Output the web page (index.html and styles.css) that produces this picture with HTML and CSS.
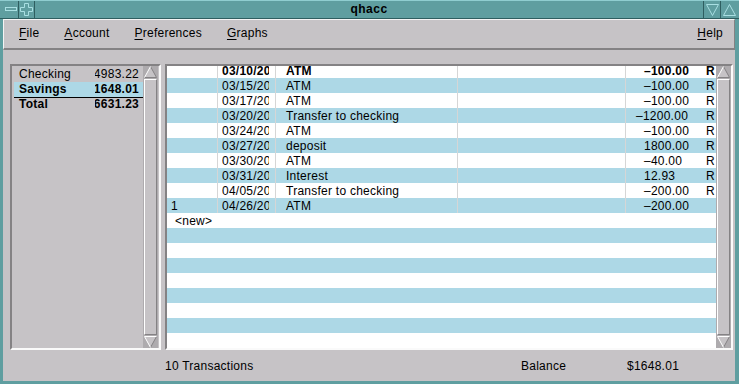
FILE: index.html
```html
<!DOCTYPE html>
<html lang="en">
<head>
    <meta charset="UTF-8">
    <meta name="viewport" content="width=device-width, initial-scale=1.0">
    <title>qhacc</title>
    <link rel="stylesheet" href="styles.css">
</head>
<body>
<div class="frame">
    <div class="titlebar">
        <div class="tbtn">
            <svg width="12" height="5"><rect x="0.5" y="0.5" width="11" height="3" fill="none" stroke="#a9dfe2"/></svg>
        </div>
        <div class="tbtn">
            <svg width="13" height="13"><polygon points="4.5,0.5 8.5,0.5 8.5,4.5 12.5,4.5 12.5,8.5 8.5,8.5 8.5,12.5 4.5,12.5 4.5,8.5 0.5,8.5 0.5,4.5 4.5,4.5" fill="none" stroke="#a9dfe2"/></svg>
        </div>
        <div class="title">qhacc</div>
        <div class="tbtn tbtn-right">
            <svg width="13" height="12"><polygon points="0.5,0.5 12.5,0.5 6.5,11.5" fill="none" stroke="#a9dfe2"/></svg>
        </div>
        <div class="tbtn tbtn-right">
            <svg width="13" height="12"><polygon points="6.5,0.5 12.5,11.5 0.5,11.5" fill="none" stroke="#a9dfe2"/></svg>
        </div>
    </div>

    <div class="window">
        <div class="menubar">
            <span class="menu-item"><u>F</u>ile</span>
            <span class="menu-item"><u>A</u>ccount</span>
            <span class="menu-item"><u>P</u>references</span>
            <span class="menu-item"><u>G</u>raphs</span>
            <span class="menu-item menu-help"><u>H</u>elp</span>
        </div>

        <div class="main">
            <div class="panel accounts">
                <div class="acct-list">
                    <div class="acct-row">
                        <span class="acct-name">Checking</span>
                        <span class="acct-amt"><span>$14983.22</span></span>
                    </div>
                    <div class="acct-row selected">
                        <span class="acct-name">Savings</span>
                        <span class="acct-amt"><span>$1648.01</span></span>
                    </div>
                    <div class="acct-row total">
                        <span class="acct-name">Total</span>
                        <span class="acct-amt"><span>$16631.23</span></span>
                    </div>
                </div>
                <div class="vscroll">
                    <svg class="arrow" width="13" height="12"><polygon points="6.5,0.5 12.5,11.5 0.5,11.5" fill="#c6c3c6"/><polyline points="6.5,0.5 12.5,11.5 0.5,11.5" fill="none" stroke="#848284"/><polyline points="0.5,11.5 6.5,0.5" fill="none" stroke="#fff"/></svg>
                    <div class="thumb"></div>
                    <svg class="arrow" width="13" height="12"><polygon points="0.5,0.5 12.5,0.5 6.5,11.5" fill="#c6c3c6"/><polyline points="12.5,0.5 6.5,11.5" fill="none" stroke="#848284"/><polyline points="6.5,11.5 0.5,0.5 12.5,0.5" fill="none" stroke="#fff"/></svg>
                </div>
            </div>

            <div class="panel ledger">
                <div class="ledger-body">
                    <div class="rows" id="rows"></div>
                </div>
                <div class="vscroll">
                    <svg class="arrow" width="13" height="12"><polygon points="6.5,0.5 12.5,11.5 0.5,11.5" fill="#c6c3c6"/><polyline points="6.5,0.5 12.5,11.5 0.5,11.5" fill="none" stroke="#848284"/><polyline points="0.5,11.5 6.5,0.5" fill="none" stroke="#fff"/></svg>
                    <div class="thumb"></div>
                    <svg class="arrow" width="13" height="12"><polygon points="0.5,0.5 12.5,0.5 6.5,11.5" fill="#c6c3c6"/><polyline points="12.5,0.5 6.5,11.5" fill="none" stroke="#848284"/><polyline points="6.5,11.5 0.5,0.5 12.5,0.5" fill="none" stroke="#fff"/></svg>
                </div>
            </div>
        </div>

        <div class="statusbar">
            <span class="status-count">10 Transactions</span>
            <span class="status-label">Balance</span>
            <span class="status-value">$1648.01</span>
        </div>
    </div>
</div>

<script>
    // Transactions for the selected account (Savings)
    const transactions = [
        { num: '',  date: '03/10/2000', desc: 'ATM', amount: '–100.00', rec: 'R' },
        { num: '',  date: '03/15/2000', desc: 'ATM', amount: '–100.00', rec: 'R' },
        { num: '',  date: '03/17/2000', desc: 'ATM', amount: '–100.00', rec: 'R' },
        { num: '',  date: '03/20/2000', desc: 'Transfer to checking', amount: '–1200.00', rec: 'R', wide: true },
        { num: '',  date: '03/24/2000', desc: 'ATM', amount: '–100.00', rec: 'R' },
        { num: '',  date: '03/27/2000', desc: 'deposit', amount: '1800.00', rec: 'R' },
        { num: '',  date: '03/30/2000', desc: 'ATM', amount: '–40.00', rec: 'R' },
        { num: '',  date: '03/31/2000', desc: 'Interest', amount: '12.93', rec: 'R' },
        { num: '',  date: '04/05/2000', desc: 'Transfer to checking', amount: '–200.00', rec: 'R' },
        { num: '1', date: '04/26/2000', desc: 'ATM', amount: '–200.00', rec: '' }
    ];

    const rows = document.getElementById('rows');
    const totalRows = 19;

    for (let i = 0; i < totalRows; i++) {
        const row = document.createElement('div');
        row.classList.add('row');
        if (i % 2 === 1) row.classList.add('alt');

        const t = transactions[i];
        if (t) {
            row.classList.add('data');
            if (i === 0) row.classList.add('current');
            row.innerHTML = `
                <span class="c-num">${t.num}</span>
                <span class="c-date"><span class="clip">${t.date}</span></span>
                <span class="c-desc">${t.desc}</span>
                <span class="c-memo"></span>
                <span class="c-amt${t.wide ? ' wide' : ''}">${t.amount}</span>
                <span class="c-rec">${t.rec}</span>
            `;
        } else if (i === transactions.length) {
            row.classList.add('entry');
            row.innerHTML = '<span class="c-new">&lt;new&gt;</span>';
        }
        rows.appendChild(row);
    }
</script>
</body>
</html>
```

FILE: styles.css
```css
body {
    margin: 0;
    font-family: "Liberation Sans", Arial, sans-serif;
    font-size: 12px;
    letter-spacing: 0.25px;
    color: #000;
}
.frame {
    width: 739px;
    height: 384px;
    box-sizing: border-box;
    background-color: #5f9ea0;
    padding: 0 4px 3px 3px;
    display: flex;
    flex-direction: column;
}

/* window manager title bar */
.titlebar {
    height: 19px;
    display: flex;
    box-sizing: border-box;
    border-top: 1px solid #8fcdd0;
    border-bottom: 1px solid #2e5e60;
    margin: 0 -4px 0 -3px;
    padding: 0 2px 0 3px;
}
.tbtn {
    width: 16px;
    display: flex;
    align-items: center;
    justify-content: center;
    box-sizing: border-box;
    border-right: 1px solid #2e5e60;
}
.tbtn-right {
    border-right: none;
    border-left: 1px solid #2e5e60;
    width: 17px;
}
.title {
    flex: 1;
    text-align: center;
    font-weight: bold;
    line-height: 17px;
    letter-spacing: 0.5px;
}

.window {
    flex: 1;
    display: flex;
    flex-direction: column;
    background-color: #c6c3c6;
}

/* menu bar */
.menubar {
    height: 31px;
    box-sizing: border-box;
    display: flex;
    align-items: center;
    gap: 25px;
    padding: 0 11px 2px 15px;
    border-top: 1px solid #f4f4f4;
    border-left: 1px solid #f4f4f4;
    border-bottom: 2px solid #848284;
    border-right: 1px solid #848284;
}
.menu-item u {
    text-decoration-thickness: 1px;
    text-underline-offset: 2px;
}
.menu-help {
    margin-left: auto;
}

.main {
    flex: 1;
    display: flex;
    gap: 4px;
    padding: 14px 2px 2px 7px;
}
.panel {
    display: flex;
    box-sizing: border-box;
    border: 2px solid;
    border-color: #848284 #fafafa #fafafa #848284;
}

/* account list */
.accounts {
    width: 151px;
    padding-left: 2px;
    padding-right: 1px;
}
.acct-list {
    flex: 1;
    padding-top: 1px;
}
.acct-row {
    display: grid;
    grid-template-columns: 81px 48px;
    height: 15px;
    line-height: 15px;
}
.acct-name {
    padding-left: 5px;
    white-space: nowrap;
    overflow: hidden;
}
.acct-amt {
    display: flex;
    justify-content: flex-end;
    overflow: hidden;
    padding-right: 4px;
    white-space: nowrap;
}
.acct-amt span {
    flex-shrink: 0;
}
.acct-row.selected {
    background-color: #add8e6;
    font-weight: bold;
}
.acct-row.total {
    font-weight: bold;
    border-top: 1px solid #000;
    line-height: 13px;
}

/* scroll bars */
.vscroll {
    width: 15px;
    box-sizing: border-box;
    display: flex;
    flex-direction: column;
    align-items: center;
    background-color: #aeabae;
    padding: 0 1px;
}
.vscroll .arrow {
    flex-shrink: 0;
    display: block;
}
.thumb {
    flex: 1;
    width: 100%;
    box-sizing: border-box;
    background-color: #c6c3c6;
    border: 1px solid;
    border-color: #fff #848284 #848284 #fff;
    margin: 1px 0;
}

/* transaction ledger */
.ledger {
    flex: 1;
}
.ledger-body {
    flex: 1;
    background-color: #fff;
    overflow: hidden;
}
.rows {
    margin-top: -3px;
}
.row {
    display: grid;
    grid-template-columns: 51px 58px 182px 168px 79px 11px;
    height: 15px;
    box-sizing: border-box;
    padding-top: 2px;
    line-height: 13px;
    white-space: nowrap;
}
.row.alt {
    background-color: #add8e6;
}
.row.current {
    font-weight: bold;
}
.row.data > span {
    box-sizing: border-box;
    overflow: hidden;
}
.row.data .c-num,
.row.data .c-date,
.row.data .c-desc,
.row.data .c-memo {
    border-right: 1px solid #d6d6d6;
    margin-top: -2px;
    padding-top: 2px;
}
.c-num {
    padding-left: 4px;
}
.c-date {
    padding-right: 6px;
    padding-left: 4px;
}
.c-date .clip {
    display: block;
    overflow: hidden;
}
.c-desc {
    padding-left: 10px;
}
.c-amt {
    padding-left: 18px;
}
.c-amt.wide {
    padding-left: 10px;
}
.c-rec {
    padding-left: 1px;
}
.c-new {
    grid-column: 1 / -1;
    padding-left: 8px;
}

/* status bar */
.statusbar {
    height: 29px;
    display: flex;
    align-items: center;
    padding-left: 162px;
    padding-bottom: 1px;
    box-sizing: border-box;
}
.status-count {
    width: 356px;
}
.status-label {
    width: 106px;
}
```
